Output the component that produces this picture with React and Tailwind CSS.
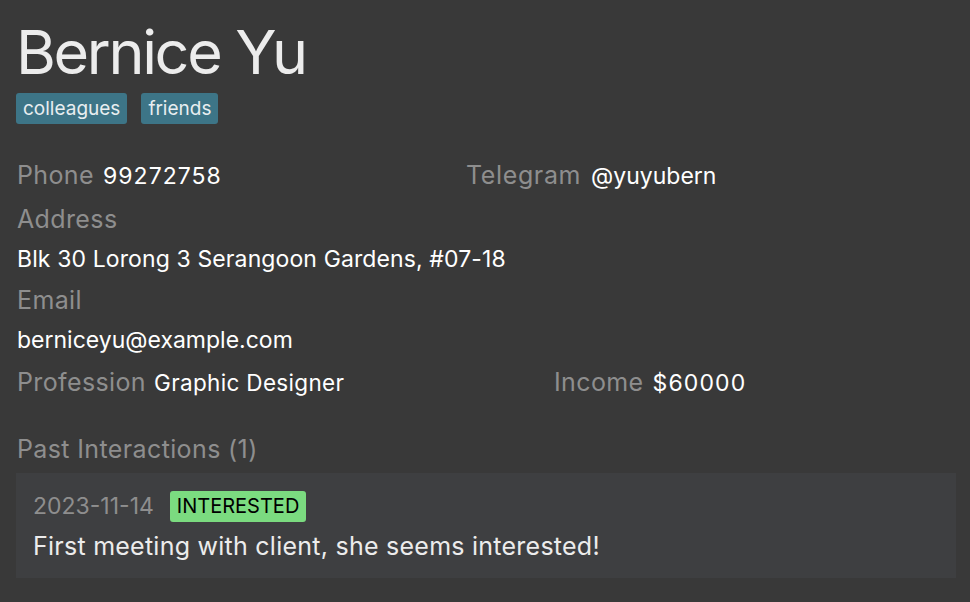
export default function App() {
  const tags = ['colleagues', 'friends']

  return (
    <div
      className="w-[970px] h-[602px] bg-[#393939] pl-4 pr-[14px] overflow-hidden"
      style={{ fontFamily: 'Inter, "Noto Sans", sans-serif' }}
    >
      <h1 className="text-[61px] leading-none tracking-[-0.038em] text-[#ececec] pt-[22px]">Bernice Yu</h1>
      <div className="flex gap-[14px] mt-[10px]">
        {tags.map((t) => (
          <span
            key={t}
            className="bg-[#3d7587] text-[#e8eef0] text-[19px] leading-[31px] h-[31px] px-[7px] rounded-[3px]"
          >
            {t}
          </span>
        ))}
      </div>

      <div className="flex items-baseline mt-[31px] text-[25px] leading-[40px] tracking-[0.015em]">
        <div className="w-[450px] flex items-baseline gap-[9px] pl-px">
          <span className="text-[#8e8e8e]">Phone</span>
          <span className="text-white text-[23px] tracking-[0.045em]">99272758</span>
        </div>
        <div className="flex items-baseline gap-[10px]">
          <span className="text-[#8e8e8e] tracking-[0.025em]">Telegram</span>
          <span className="text-white text-[23px] tracking-normal">@yuyubern</span>
        </div>
      </div>

      <div className="text-[#8e8e8e] text-[25px] leading-[40px] tracking-[0.015em] mt-[3px] pl-px">Address</div>
      <div className="text-white text-[23px] leading-[40px] tracking-[0.005em] pl-px">
        Blk 30 Lorong 3 Serangoon Gardens, #07-18
      </div>
      <div className="text-[#8e8e8e] text-[25px] leading-[40px] tracking-[0.015em] mt-[1px] pl-px">Email</div>
      <div className="text-white text-[23px] leading-[40px] pl-px">berniceyu@example.com</div>

      <div className="flex items-baseline text-[25px] leading-[44px] tracking-[0.015em] pl-px">
        <div className="w-[537px] flex items-baseline gap-[8px]">
          <span className="text-[#8e8e8e]">Profession</span>
          <span className="text-white text-[22.5px] tracking-[0.015em]">Graphic Designer</span>
        </div>
        <div className="flex items-baseline gap-[9px]">
          <span className="text-[#8e8e8e]">Income</span>
          <span className="text-white text-[23px] tracking-[0.05em]">$60000</span>
        </div>
      </div>

      <div className="text-[#8e8e8e] text-[25px] leading-[40px] tracking-[0.015em] mt-[24px] pl-px">
        Past Interactions (1)
      </div>
      <div className="bg-[#3e3f41] mt-[4px] h-[105px] px-[17px] pt-[18px]">
        <div className="flex items-center gap-4">
          <span className="text-[#8e8e8e] text-[23px] leading-[31px]">2023-11-14</span>
          <span className="bg-[#7bdb80] text-black text-[20px] leading-[31px] h-[31px] px-[7px] rounded-[3px]">
            INTERESTED
          </span>
        </div>
        <div className="text-[#ececec] text-[25px] leading-[40px] tracking-[0.01em] mt-[4px]">
          First meeting with client, she seems interested!
        </div>
      </div>
    </div>
  )
}
